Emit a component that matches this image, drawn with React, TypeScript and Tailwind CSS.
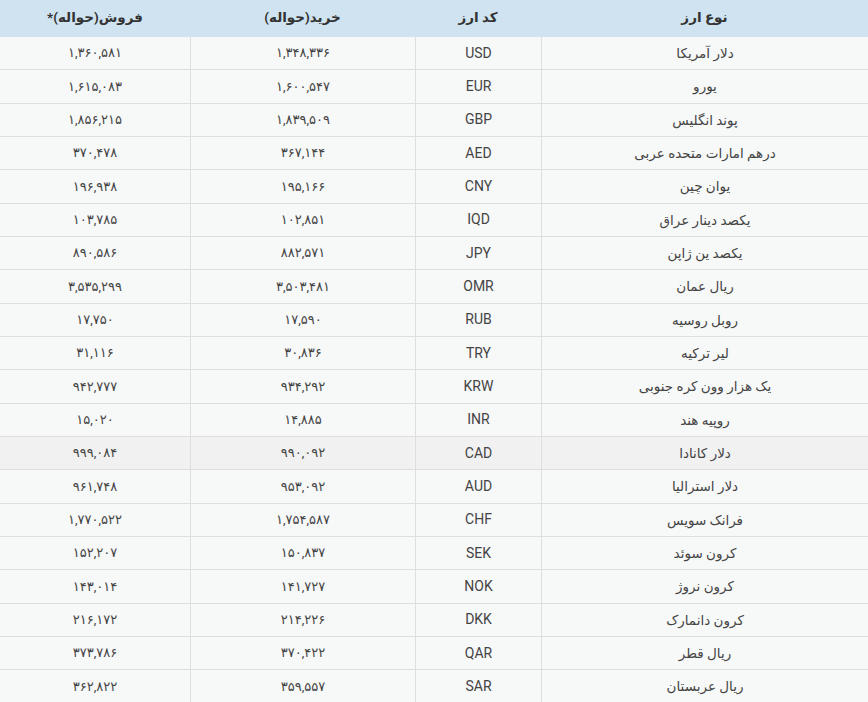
const rows: [string, string, string, string, boolean?][] = [
  ['دلار آمریکا', 'USD', '۱,۳۴۸,۳۳۶', '۱,۳۶۰,۵۸۱'],
  ['یورو', 'EUR', '۱,۶۰۰,۵۴۷', '۱,۶۱۵,۰۸۳'],
  ['پوند انگلیس', 'GBP', '۱,۸۳۹,۵۰۹', '۱,۸۵۶,۲۱۵'],
  ['درهم امارات متحده عربی', 'AED', '۳۶۷,۱۴۴', '۳۷۰,۴۷۸'],
  ['یوان چین', 'CNY', '۱۹۵,۱۶۶', '۱۹۶,۹۳۸'],
  ['یکصد دینار عراق', 'IQD', '۱۰۲,۸۵۱', '۱۰۳,۷۸۵'],
  ['یکصد ین ژاپن', 'JPY', '۸۸۲,۵۷۱', '۸۹۰,۵۸۶'],
  ['ریال عمان', 'OMR', '۳,۵۰۳,۴۸۱', '۳,۵۳۵,۲۹۹'],
  ['روبل روسیه', 'RUB', '۱۷,۵۹۰', '۱۷,۷۵۰'],
  ['لیر ترکیه', 'TRY', '۳۰,۸۳۶', '۳۱,۱۱۶'],
  ['یک هزار وون کره جنوبی', 'KRW', '۹۳۴,۲۹۲', '۹۴۲,۷۷۷'],
  ['روپیه هند', 'INR', '۱۴,۸۸۵', '۱۵,۰۲۰'],
  ['دلار کانادا', 'CAD', '۹۹۰,۰۹۲', '۹۹۹,۰۸۴', true],
  ['دلار استرالیا', 'AUD', '۹۵۳,۰۹۲', '۹۶۱,۷۴۸'],
  ['فرانک سویس', 'CHF', '۱,۷۵۴,۵۸۷', '۱,۷۷۰,۵۲۲'],
  ['کرون سوئد', 'SEK', '۱۵۰,۸۳۷', '۱۵۲,۲۰۷'],
  ['کرون نروژ', 'NOK', '۱۴۱,۷۲۷', '۱۴۳,۰۱۴'],
  ['کرون دانمارک', 'DKK', '۲۱۴,۲۲۶', '۲۱۶,۱۷۲'],
  ['ریال قطر', 'QAR', '۳۷۰,۴۲۲', '۳۷۳,۷۸۶'],
  ['ریال عربستان', 'SAR', '۳۵۹,۵۵۷', '۳۶۲,۸۲۲'],
];

const font = { fontFamily: "Roboto, 'DejaVu Sans', sans-serif" };

export default function App() {
  return (
    <div dir="rtl" className="w-[868px] h-[702px] overflow-hidden bg-white" style={font}>
      <div className="grid grid-cols-[327px_126px_225px_190px] h-[37px] bg-[#cfe3f1] text-[13.5px] font-bold text-[#333]">
        <div className="flex items-center justify-center pb-[2px]">نوع ارز</div>
        <div className="flex items-center justify-center pb-[2px]">کد ارز</div>
        <div className="flex items-center justify-center pb-[2px]">خرید(حواله)</div>
        <div className="flex items-center justify-center pb-[2px]">فروش(حواله)*</div>
      </div>
      {rows.map(([name, code, buy, sell, hover]) => (
        <div
          key={code}
          className={`grid grid-cols-[327px_126px_225px_190px] h-[33.34px] border-b border-[#dedede] text-[13px] text-[#444] ${hover ? 'bg-[#f1f1f1]' : 'bg-[#f7f8f8]'}`}
        >
          <div className="flex items-center justify-center border-l border-[#dedede] text-[13.5px]">{name}</div>
          <div className="flex items-center justify-center border-l border-[#dedede] text-[14px]">{code}</div>
          <div className="flex items-center justify-center border-l border-[#dedede]">{buy}</div>
          <div className="flex items-center justify-center">{sell}</div>
        </div>
      ))}
    </div>
  );
}
